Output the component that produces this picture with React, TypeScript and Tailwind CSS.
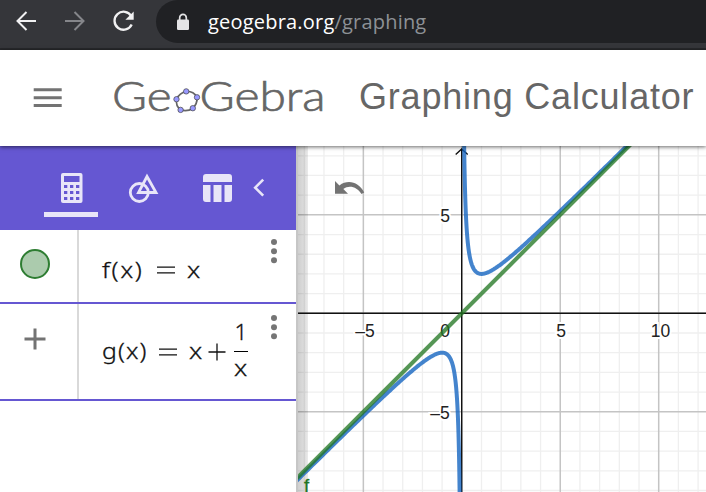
import React from "react";

const OX = 163.8;
const OY = 167.3;
const UNIT = 19.69;

function branch(from: number, to: number, steps: number) {
  const pts: string[] = [];
  const ratio = to / from;
  for (let i = 0; i <= steps; i++) {
    const x = from * Math.pow(ratio, i / steps);
    const y = x + 1 / x;
    pts.push(`${(OX + x * UNIT).toFixed(2)},${(OY - y * UNIT).toFixed(2)}`);
  }
  return "M" + pts.join("L");
}

function BrowserBar() {
  return (
    <div className="flex h-[50px] items-start border-b-2 border-[#27282b] bg-[#35363a]">
      <svg className="h-[48px] w-[156px] shrink-0" viewBox="0 0 156 48" fill="none" strokeWidth="2">
        <path d="M36 21H17.5M26.5 12l-9 9 9 9" stroke="#f1f1f2" />
        <path d="M65 21h18.500M74.500 12l9 9-9 9" stroke="#85868a" />
        <path d="M131.300 16.200A9 9 0 1 0 131.700 24.500" stroke="#f1f1f2" strokeWidth="2.300" />
        <path d="M133.700 11.500v8.300h-8.300z" fill="#f1f1f2" />
      </svg>
      <div className="flex h-[43px] flex-1 items-center rounded-l-full bg-[#202124] pl-[20px]">
        <svg className="mr-[18px] h-[18px] w-[14px]" viewBox="0 0 14 18">
          <path d="M3.700 8V4.700a3.300 3.300 0 0 1 6.600 0V8" fill="none" stroke="#e4e4e6" strokeWidth="1.700" />
          <rect x="1" y="6.500" width="12" height="10.500" rx="1.200" fill="#e4e4e6" />
        </svg>
        <span className="font-['Open_Sans',sans-serif] text-[20px] leading-[24px] tracking-[0.200px] text-white">
          geogebra.org<span className="text-[#8d9196]">/graphing</span>
        </span>
      </div>
    </div>
  );
}

function Logo() {
  const nodes = [[85.700, 21.400], [96.500, 27.300], [92.300, 38.200], [80.100, 39.900], [76, 29.200]];
  return (
    <svg className="ml-[50px] h-[60px] w-[213px] shrink-0" viewBox="0 0 213 60">
      <g fill="#666666" stroke="#666666" strokeWidth=".7" fontFamily="Lato, sans-serif" fontWeight="300" fontSize="40.500">
        <text x="-1" y="43" textLength="59.500" lengthAdjust="spacingAndGlyphs">Ge</text>
        <text x="86.500" y="43" textLength="126" lengthAdjust="spacingAndGlyphs">Gebra</text>
      </g>
      <g transform="translate(-12.500 2)">
        <path d="M85.700 21.400Q93 21 96.500 27.300Q97 34 92.300 38.200Q87 42 80.100 39.900Q75 36 76 29.200Q79 23 85.700 21.400Z" fill="none" stroke="#666" strokeWidth="1.700" />
        {nodes.map(([x, y]) => (
          <circle key={x} cx={x} cy={y} r="2.700" fill="#9999ff" stroke="#444" strokeWidth=".7" />
        ))}
      </g>
    </svg>
  );
}

function Header() {
  return (
    <header className="relative z-10 flex h-[96px] items-center bg-white pl-[33px] shadow-[0_1px_4px_rgba(0,0,0,0.6)]">
      <svg className="h-[20px] w-[30px] shrink-0" viewBox="0 0 30 20" fill="#737373">
        <path d="M.7 .2h28v3H.7zM.7 8.200h28v3H.7zM.7 15.900h28v3H.7z" />
      </svg>
      <Logo />
      <h1 className="ml-[33px] whitespace-nowrap pb-[2px] font-['Liberation_Sans',Arial,sans-serif] text-[36px] leading-[40px] tracking-[0.800px] text-[#666]">
        Graphing Calculator
      </h1>
    </header>
  );
}

function Tabs() {
  return (
    <nav className="h-[84px] bg-[#6557d2]">
      <svg className="h-[84px] w-[296px]" viewBox="0 0 296 84" fill="#e8e5f8">
        <rect x="61" y="27" width="21.500" height="30" rx="2" />
        <g fill="#6557d2">
          <rect x="64" y="30" width="15.500" height="6" />
          {[39, 45, 51].map((y) =>
            [64, 70, 76].map((x) => <rect key={`${x}-${y}`} x={x} y={y} width="3.300" height="3" />)
          )}
        </g>
        <rect x="44" y="66" width="54" height="5" />
        <circle cx="139.300" cy="46.500" r="9" fill="none" stroke="#e8e5f8" strokeWidth="2.800" />
        <path d="M147 30.500L156 46.500H138.500Z" fill="none" stroke="#e8e5f8" strokeWidth="2.800" />
        <path d="M203 36v-5a3 3 0 0 1 3-3h23a3 3 0 0 1 3 3v5zM203 39h7.500v17h-4.500a3 3 0 0 1-3-3zM213.500 39h8v17h-8zM224.500 39h7.500v14a3 3 0 0 1-3 3h-4.500z" />
        <path d="M263.200 33.700l-8 8 8 8" fill="none" stroke="#e8e5f8" strokeWidth="2.600" />
      </svg>
    </nav>
  );
}

function More() {
  return (
    <svg className="h-[26px] w-[8px] shrink-0" viewBox="0 0 8 26" fill="#757575">
      <circle cx="4" cy="4" r="3" />
      <circle cx="4" cy="13.200" r="3" />
      <circle cx="4" cy="22.300" r="3" />
    </svg>
  );
}

function Algebra() {
  return (
    <aside className="w-[296px] shrink-0 bg-white font-['Noto_Sans',sans-serif] text-[22.500px] font-normal leading-[30px] text-[#111]">
      <Tabs />
      <div className="flex h-[74px] border-b-2 border-[#6557d2]">
        <div className="w-[79px] shrink-0 border-r-2 border-[#d9d9d9] pl-[20px] pt-[19px]">
          <div className="size-[30px] rounded-full border-2 border-[#2e7d32] bg-[#abcbad]" />
        </div>
        <div className="flex w-[191px] items-center pl-[23px] pt-[7px]">
          <span className="w-[42px] origin-left scale-x-[1.12] font-light tracking-[1.600px] [-webkit-text-stroke:0.3px]">f(x)</span>
          <Equals className="ml-[13px]" />
          <span className="ml-[12px] origin-left scale-x-[1.17] font-light [-webkit-text-stroke:0.3px]">x</span>
        </div>
        <div className="pt-[8px]"><More /></div>
      </div>
      <div className="flex h-[97px] border-b-2 border-[#6557d2]">
        <div className="w-[79px] shrink-0 border-r-2 border-[#d9d9d9] pl-[24px] pt-[24px]">
          <svg className="size-[22px]" viewBox="0 0 22 22"><path d="M0.500 11h21M11 .5v21" stroke="#737373" strokeWidth="3" /></svg>
        </div>
        <div className="flex w-[191px] items-center pl-[23px]">
          <span className="relative -top-px w-[45px] origin-left scale-x-[1.1] font-light tracking-[1px] [-webkit-text-stroke:0.3px]">g(x)</span>
          <Equals className="ml-[12px]" />
          <span className="relative -top-px ml-[12px] w-[12px] origin-left scale-x-[1.17] font-light [-webkit-text-stroke:0.3px]">x</span>
          <svg className="ml-[7px] size-[18px] shrink-0" viewBox="0 0 18 18"><path d="M.5 9h17M9 .5v17" stroke="#111" strokeWidth="1.300" /></svg>
          <span className="ml-[8px] flex w-[14px] flex-col items-center font-light [-webkit-text-stroke:0.3px]">
            <span className="h-[34px]">1</span>
            <span className="h-px w-[14px] bg-black" />
            <span className="h-[34px] scale-x-[1.17] pt-px">x</span>
          </span>
        </div>
        <div className="pt-[10px]"><More /></div>
      </div>
    </aside>
  );
}

function Equals({ className }: { className: string }) {
  return (
    <svg className={`${className} h-[10px] w-[18px] shrink-0`} viewBox="0 0 18 10">
      <path d="M0 2.200h18M0 7.800h18" stroke="#111" strokeWidth="1.300" />
    </svg>
  );
}

function Graph() {
  const cols = Array.from({ length: 22 }, (_, i) => i - 8);
  const rows = Array.from({ length: 19 }, (_, i) => i - 9);
  return (
    <main className="flex min-w-0 flex-1 border-l-2 border-[#c6c6c6] bg-white">
      <svg className="h-[346px] w-[408px] shrink-0" viewBox="0 0 408 346">
        <defs>
          <linearGradient id="edge">
            <stop offset="0" stopColor="#000" stopOpacity=".19" />
            <stop offset=".75" stopColor="#000" stopOpacity=".12" />
            <stop offset="1" stopColor="#000" stopOpacity=".08" />
          </linearGradient>
        </defs>
        {[false, true].map((major) => (
          <g key={String(major)} stroke={major ? "#c4c4c4" : "#efefef"} strokeWidth={major ? 1.500 : 1.300}>
            {cols.filter((n) => (n % 5 === 0) === major).map((n) => (
              <line key={`x${n}`} x1={OX + n * UNIT} x2={OX + n * UNIT} y1="0" y2="346" />
            ))}
            {rows.filter((n) => (n % 5 === 0) === major).map((n) => (
              <line key={`y${n}`} x1="0" x2="408" y1={OY - n * UNIT} y2={OY - n * UNIT} />
            ))}
          </g>
        ))}
        <rect width="10" height="346" fill="url(#edge)" />
        <path d="M0 167.300H408M163.700 346V3M157.700 8.500l6-5.500 6 5.500" fill="none" stroke="#111" strokeWidth="1.400" />
        <g fill="#222" stroke="#fff" strokeWidth="4" paintOrder="stroke" fontFamily="Liberation Sans, Arial, sans-serif" fontSize="17.500" textAnchor="middle">
          <text x="67" y="191.300">–5</text>
          <text x="147" y="191.300">0</text>
          <text x="263.200" y="191.300">5</text>
          <text x="362.500" y="191.300">10</text>
          <text x="147" y="76.300">5</text>
          <text x="142" y="272.500">–5</text>
        </g>
        <g fill="none" strokeWidth="4" stroke="#1565c0" strokeOpacity=".8">
          <path d={branch(0.08, 14, 300)} />
          <path d={branch(-10, -0.08, 300)} />
        </g>
        <path d={`M${OX - 10 * UNIT} ${OY + 10 * UNIT}L${OX + 13 * UNIT} ${OY - 13 * UNIT}`} stroke="#227722" strokeOpacity=".77" strokeWidth="4" />
        <path d="M37 35v12.700h13l-4.700-4.700c6-4.500 14-2 18.200 5l2.700-1.600c-5.300-10.300-16-13.400-24.800-7z" fill="#737373" />
        <text x="6" y="345.500" fill="#207522" stroke="#207522" strokeWidth=".3" fontFamily="Liberation Sans, Arial, sans-serif" fontSize="18.500">f</text>
      </svg>
    </main>
  );
}

export default function App() {
  return (
    <div className="flex h-[492px] w-[706px] flex-col overflow-hidden bg-white">
      <BrowserBar />
      <Header />
      <div className="flex h-[346px]">
        <Algebra />
        <Graph />
      </div>
    </div>
  );
}
